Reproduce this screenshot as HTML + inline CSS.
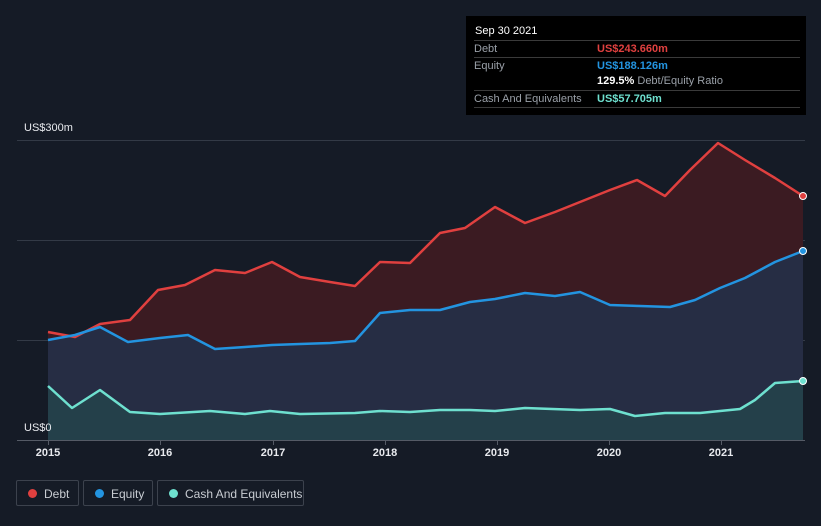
<!DOCTYPE html>
<html><head><meta charset="utf-8"><style>
body{margin:0;background:#151b26;width:821px;height:526px;overflow:hidden;font-family:"Liberation Sans",sans-serif;position:relative}
.tt{position:absolute;left:466px;top:16px;width:340px;height:99px;background:#000;color:#fff;font-size:11px}
.row{position:absolute;left:8px;right:6px;border-top:1px solid #3a3a3a;height:17px}
.row span{position:absolute;top:2px}
.lab{color:#9aa0a8}
.leg{position:absolute;top:480px;height:26px;border:1px solid #3c424d;border-radius:2px;color:#c8ccd2;font-size:12px;line-height:26px;box-sizing:border-box}
.leg i{position:absolute;left:11px;top:8px;width:9px;height:9px;border-radius:50%}
.leg span{position:absolute;left:27px}
.ax{position:absolute;top:447px;color:#e8eaee;font-size:11px;font-weight:bold;transform:translateX(-50%)}
</style></head><body>
<svg width="821" height="526" style="position:absolute;left:0;top:0">
<g stroke="#333a46" stroke-width="1"><line x1="17" y1="140.5" x2="805" y2="140.5"/><line x1="17" y1="240.5" x2="805" y2="240.5"/><line x1="17" y1="340.5" x2="805" y2="340.5"/></g>
<path d="M48,332 L75,337 100,324 130,320 158,290 185,285 215,270 245,273 272,262 300,277 330,282 355,286 380,262 410,263 440,233 465,228 495,207 525,223 555,212 585,200 610,190 637,180 665,196 690,170 718,143 745,160 775,178 803,196 L803,440 48,440Z" fill="#3b1b22"/>
<path d="M48,340 L75,335 100,327 128,342 160,338 188,335 215,349 245,347 272,345 300,344 330,343 355,341 380,313 410,310 440,310 470,302 495,299 525,293 555,296 580,292 610,305 640,306 670,307 695,300 720,288 745,278 775,262 803,251 L803,440 48,440Z" fill="#262d44"/>
<path d="M48,386 L72,408 100,390 130,412 160,414 210,411 245,414 270,411 300,414 355,413 380,411 410,412 440,410 470,410 495,411 525,408 580,410 610,409 635,416 665,413 700,413 740,409 755,400 775,383 803,381 L803,440 48,440Z" fill="#24404a"/>
<line x1="17" y1="440.5" x2="805" y2="440.5" stroke="#555b66"/>
<g fill="none" stroke-width="2.5" stroke-linejoin="round">
<path d="M48,332 L75,337 100,324 130,320 158,290 185,285 215,270 245,273 272,262 300,277 330,282 355,286 380,262 410,263 440,233 465,228 495,207 525,223 555,212 585,200 610,190 637,180 665,196 690,170 718,143 745,160 775,178 803,196" stroke="#e0403f"/>
<path d="M48,340 L75,335 100,327 128,342 160,338 188,335 215,349 245,347 272,345 300,344 330,343 355,341 380,313 410,310 440,310 470,302 495,299 525,293 555,296 580,292 610,305 640,306 670,307 695,300 720,288 745,278 775,262 803,251" stroke="#2394e0"/>
<path d="M48,386 L72,408 100,390 130,412 160,414 210,411 245,414 270,411 300,414 355,413 380,411 410,412 440,410 470,410 495,411 525,408 580,410 610,409 635,416 665,413 700,413 740,409 755,400 775,383 803,381" stroke="#6ee0cf"/>
</g>
<circle cx="803" cy="196" r="3.5" fill="#e0403f" stroke="#fff" stroke-width="1"/>
<circle cx="803" cy="251" r="3.5" fill="#2394e0" stroke="#fff" stroke-width="1"/>
<circle cx="803" cy="381" r="3.5" fill="#6ee0cf" stroke="#fff" stroke-width="1"/>
<g stroke="#555b66"><line x1="48.5" y1="440" x2="48.5" y2="445"/><line x1="160.5" y1="440" x2="160.5" y2="445"/><line x1="273.5" y1="440" x2="273.5" y2="445"/><line x1="385.5" y1="440" x2="385.5" y2="445"/><line x1="497.5" y1="440" x2="497.5" y2="445"/><line x1="609.5" y1="440" x2="609.5" y2="445"/><line x1="721.5" y1="440" x2="721.5" y2="445"/></g>
</svg>
<div style="position:absolute;left:24px;top:122px;color:#e8eaee;font-size:11px">US$300m</div>
<div style="position:absolute;left:24px;top:422px;color:#e8eaee;font-size:11px">US$0</div>
<div class="ax" style="left:48px">2015</div><div class="ax" style="left:160px">2016</div><div class="ax" style="left:273px">2017</div><div class="ax" style="left:385px">2018</div><div class="ax" style="left:497px">2019</div><div class="ax" style="left:609px">2020</div><div class="ax" style="left:721px">2021</div>
<div class="tt">
<div style="position:absolute;left:9px;top:9px;font-size:11px">Sep 30 2021</div>
<div class="row" style="top:24px"><span class="lab">Debt</span><span style="left:123px;color:#e0403f;font-weight:bold">US$243.660m</span></div>
<div class="row" style="top:41px"><span class="lab">Equity</span><span style="left:123px;color:#2394e0;font-weight:bold">US$188.126m</span></div>
<div style="position:absolute;left:131px;top:59px"><b>129.5%</b> <span class="lab">Debt/Equity Ratio</span></div>
<div class="row" style="top:74px"><span class="lab">Cash And Equivalents</span><span style="left:123px;color:#6ee0cf;font-weight:bold">US$57.705m</span></div>
<div class="row" style="top:91px;border-top-color:#3a3a3a"></div>
</div>
<div class="leg" style="left:16px;width:63px"><i style="background:#e0403f"></i><span>Debt</span></div>
<div class="leg" style="left:83px;width:70px"><i style="background:#2394e0"></i><span>Equity</span></div>
<div class="leg" style="left:157px;width:147px"><i style="background:#6ee0cf"></i><span>Cash And Equivalents</span></div>
</body></html>
